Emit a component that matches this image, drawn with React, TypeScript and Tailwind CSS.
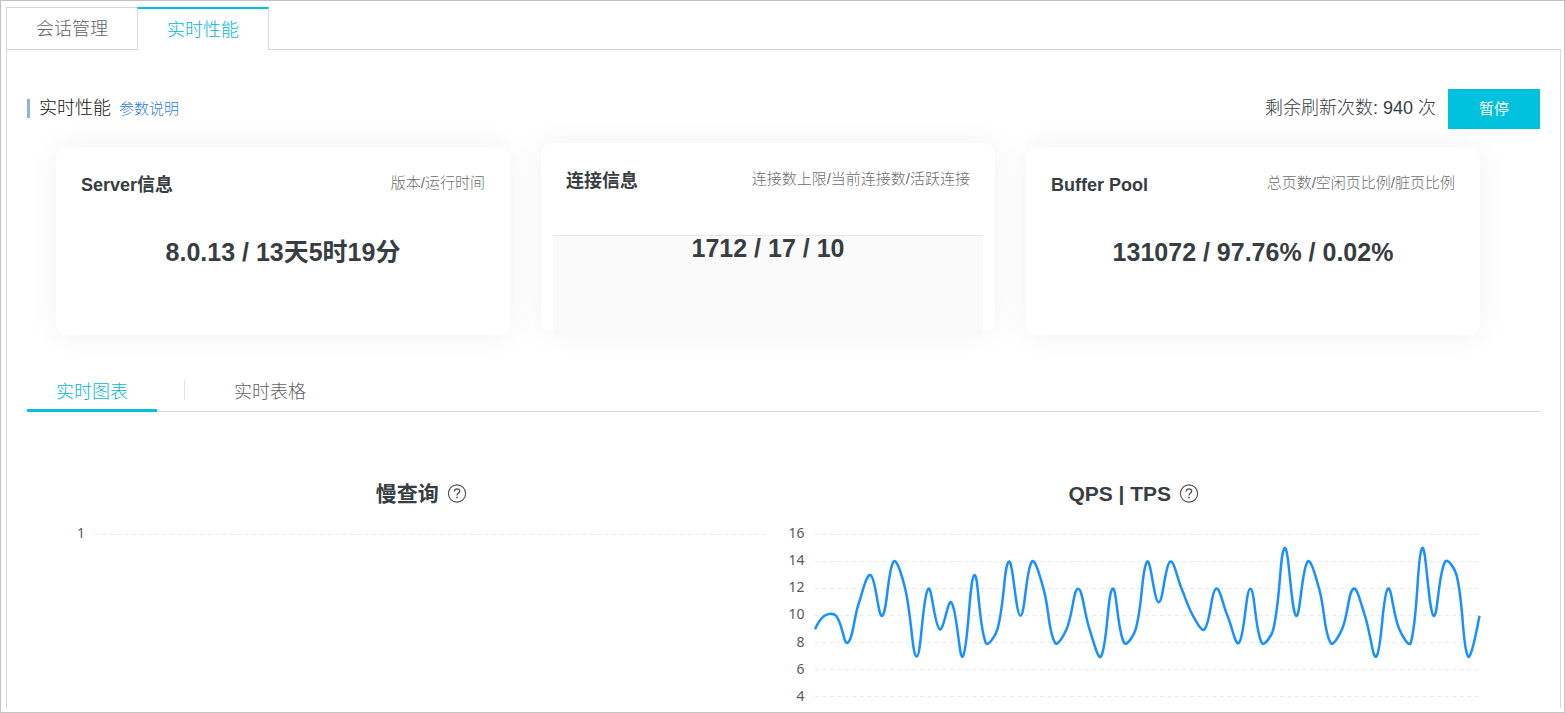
import { useState } from 'react';

interface ChartProps {
  title: string;
  ticks: number[];
  data?: number[];
  labelClass: string;
}

const PLOT_WIDTH = 664;
const PLOT_TOP = 10.5;
const TICK_STEP = 27.1;

const pageTabs = ['会话管理', '实时性能'];

const cards = [
  { title: 'Server信息', hint: '版本/运行时间', value: '8.0.13 / 13天5时19分' },
  { title: '连接信息', hint: '连接数上限/当前连接数/活跃连接', value: '1712 / 17 / 10', active: true },
  { title: 'Buffer Pool', hint: '总页数/空闲页比例/脏页比例', value: '131072 / 97.76% / 0.02%' },
];

const qps = [
  9, 10, 10, 8, 11, 13, 10, 14, 12, 7, 12, 9, 11, 7, 13, 8, 9, 14, 10, 14, 12, 8, 9, 12, 9, 7, 12, 8, 9, 14,
  11, 14, 12, 10, 9, 12, 10, 8, 12, 8, 9, 15, 10, 14, 12, 8, 9, 12, 10, 7, 12, 9, 8, 15, 10, 14, 13, 7, 10,
];

const drift = (i: number) => (i > 0 && i < 30 ? (30 - i) / 15 : 0);

// smooth bezier through every sample, tension 0.4
function smoothPath(values: number[], max: number) {
  const pts = values.map((v, i) => [
    (i * PLOT_WIDTH) / (values.length - 1) - drift(i),
    PLOT_TOP + ((max - v) * TICK_STEP) / 2,
  ]);
  const ctrl = pts.map((p, i) => {
    const prev = pts[i - 1];
    const next = pts[i + 1];
    if (!prev || !next) return [p, p];
    const d0 = Math.hypot(p[0] - prev[0], p[1] - prev[1]);
    const d1 = Math.hypot(p[0] - next[0], p[1] - next[1]);
    const vx = (next[0] - prev[0]) * 0.4;
    const vy = (next[1] - prev[1]) * 0.4;
    const a = d0 / (d0 + d1);
    const b = d1 / (d0 + d1);
    return [
      [p[0] - vx * a, p[1] - vy * a],
      [p[0] + vx * b, p[1] + vy * b],
    ];
  });
  return pts
    .map((p, i) => (i === 0 ? `M${p}` : `C${ctrl[i - 1][1]} ${ctrl[i][0]} ${p}`))
    .join(' ');
}

function HelpIcon() {
  return (
    <svg viewBox="0 0 20 20" className="w-5 h-5 text-[#4a4f53]" fill="none" stroke="currentColor" aria-hidden="true">
      <circle cx="10" cy="9.5" r="8.6" strokeWidth="1.1" />
      <path d="M7.3 7.4c0-1.7 1.2-2.6 2.7-2.6s2.7.9 2.7 2.3c0 1-.6 1.6-1.4 2.2-.8.6-1.3 1-1.3 2.1" strokeWidth="1.3" />
      <path d="M10 12.7v1.6" strokeWidth="1.6" />
    </svg>
  );
}

function Chart({ title, ticks, data, labelClass }: ChartProps) {
  return (
    <section>
      <div className="flex items-center justify-center gap-2 h-7">
        <h2 className="text-[21px] font-bold">{title}</h2>
        <HelpIcon />
      </div>
      <div className="flex mt-4 pr-[11px] h-[183px]">
        <div
          className={`${labelClass} mr-[10px] -mt-px mb-px flex flex-col justify-between shrink-0 text-right text-sm leading-5 text-[#595959] font-['Noto_Sans',sans-serif]`}
        >
          {ticks.map((tick) => (
            <span key={tick}>{tick}</span>
          ))}
        </div>
        <svg
          viewBox={`0 0 ${PLOT_WIDTH} 183`}
          preserveAspectRatio="none"
          className="flex-1 min-w-0 h-full overflow-visible"
          fill="none"
        >
          {ticks.map((tick, idx) => (
            <path
              key={tick}
              d={`M0 ${PLOT_TOP + Math.floor(idx * TICK_STEP)}H${PLOT_WIDTH}`}
              stroke="#e8e8e8"
              strokeDasharray="3.75 3.75"
              vectorEffect="non-scaling-stroke"
            />
          ))}
          {data && (
            <path
              d={smoothPath(data, ticks[0])}
              stroke="#1890ff"
              strokeWidth="2.5"
              strokeLinejoin="round"
              vectorEffect="non-scaling-stroke"
            />
          )}
        </svg>
      </div>
    </section>
  );
}

function App() {
  const [tab, setTab] = useState('实时性能');
  const [view, setView] = useState('chart');

  return (
    <div className="flex flex-col min-h-screen border border-[#c3c3c3] bg-white pt-[6px] pl-[5px] pr-[3px] pb-1 text-[#373d41] font-['Liberation_Sans','Noto_Sans_CJK_SC',sans-serif]">
      <nav className="relative z-10 flex h-[43px] -mb-px">
        {pageTabs.map((name) => (
          <button
            key={name}
            onClick={() => setTab(name)}
            className={`px-[29px] text-lg font-light border-[#d7d8d9] ${
              tab === name
                ? 'border-x border-t-2 border-t-[#00c1de] bg-white text-[#00b8d4]'
                : 'border-l border-y text-[#5f6366]'
            }`}
          >
            {name}
          </button>
        ))}
      </nav>

      <main className="flex-1 border border-b-0 border-[#d7d8d9] pt-[39px] px-5">
        <header className="flex items-center justify-between">
          <div className="flex items-center">
            <h1 className="flex items-center pb-[2px] text-lg font-light text-[#111]">
              <span className="w-[3px] h-[19px] mr-[9px] bg-[#8ab4de]" />
              实时性能
            </h1>
            <a href="#params" className="ml-2 text-[15px] font-light text-[#2a7ce0]">
              参数说明
            </a>
          </div>
          <div className="flex items-center gap-3">
            <span className="pb-[2px] text-lg font-light">剩余刷新次数: 940 次</span>
            <button className="w-[92px] h-10 bg-[#00c1de] text-white text-[15px]">暂停</button>
          </div>
        </header>

        <div className="grid grid-cols-3 gap-[31px] mt-[18px] pl-[29px] pr-[60px]">
          {cards.map((card) => (
            <section
              key={card.title}
              className={`flex flex-col h-[188px] px-3 rounded-[10px] bg-white shadow-[0_0_32px_rgba(0,0,0,0.06)] ${
                card.active ? '-translate-y-1' : ''
              }`}
            >
              <div className="flex items-start justify-between px-[13px] pt-6 h-[92px]">
                <h2 className="text-lg leading-7 font-bold">{card.title}</h2>
                <span className="text-[15px] leading-6 font-light text-[#6e6e6e]">{card.hint}</span>
              </div>
              <p
                className={`flex-1 border-t text-center text-[25px] leading-6 font-bold ${
                  card.active ? 'border-[#e6e6e6] bg-[#fafafa]' : 'border-transparent'
                }`}
              >
                {card.value}
              </p>
            </section>
          ))}
        </div>

        <nav className="flex items-center h-10 mt-[37px] border-b border-[#d7d8d9]">
          <button
            onClick={() => setView('chart')}
            className={`h-10 px-[29px] pt-[3px] border-b-3 text-lg font-light ${
              view === 'chart' ? 'border-[#00c1de] text-[#00b8d4]' : 'border-transparent text-[#5f6366]'
            }`}
          >
            实时图表
          </button>
          <span className="w-px h-5 mb-1 ml-[27px] mr-5 bg-[#e0e0e0]" />
          <button
            onClick={() => setView('table')}
            className={`h-10 px-[29px] pt-[3px] border-b-3 text-lg font-light ${
              view === 'table' ? 'border-[#00c1de] text-[#00b8d4]' : 'border-transparent text-[#5f6366]'
            }`}
          >
            实时表格
          </button>
        </nav>

        <div className="grid grid-cols-2 mt-[68px] pl-[38px] pr-[50px]">
          <Chart title="慢查询" ticks={[1]} labelClass="w-5" />
          <Chart title="QPS | TPS" ticks={[16, 14, 12, 10, 8, 6, 4]} data={qps} labelClass="w-[27px]" />
        </div>
      </main>
    </div>
  );
}

export default App;
